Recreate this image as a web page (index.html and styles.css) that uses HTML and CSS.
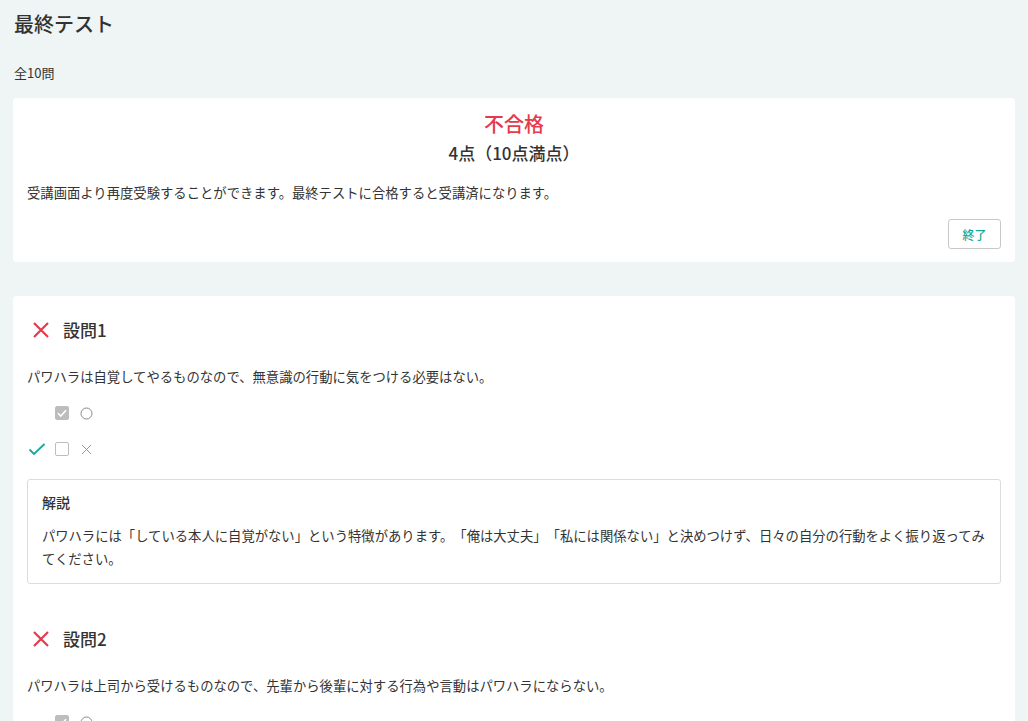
FILE: index.html
```html
<!DOCTYPE html>
<html lang="ja">
<head>
<meta charset="utf-8">
<title>最終テスト</title>
<link rel="stylesheet" href="styles.css">
</head>
<body>
<h1 class="page-title">最終テスト</h1>
<div class="count">全10問</div>

<section class="card result">
  <div class="result-status">不合格</div>
  <div class="result-score">4点（10点満点）</div>
  <p class="result-note">受講画面より再度受験することができます。最終テストに合格すると受講済になります。</p>
  <div class="result-actions"><button class="btn-end">終了</button></div>
</section>

<section class="card questions">
  <div class="question">
    <div class="q-head">
      <svg class="q-mark" width="24" height="24" viewBox="0 0 24 24"><path d="M5 5L19 19M19 5L5 19" stroke="#e63a4c" stroke-width="2.2" fill="none"/></svg>
      <span class="q-title">設問1</span>
    </div>
    <p class="q-text">パワハラは自覚してやるものなので、無意識の行動に気をつける必要はない。</p>
    <div class="options">
      <div class="opt">
        <span class="opt-slot"></span>
        <span class="box checked"><svg width="14" height="14" viewBox="0 0 14 14"><path d="M3 7.2L5.8 10L11 4.2" stroke="#fff" stroke-width="1.6" fill="none"/></svg></span>
        <span class="opt-label"><svg width="13" height="13" viewBox="0 0 13 13"><circle cx="6.5" cy="6.5" r="5.5" stroke="#888" stroke-width="1" fill="none"/></svg></span>
      </div>
      <div class="opt">
        <span class="opt-slot"><svg width="20" height="20" viewBox="0 0 20 20"><path d="M2.5 10.5L7 15L17.5 5" stroke="#17a89b" stroke-width="1.8" fill="none"/></svg></span>
        <span class="box"></span>
        <span class="opt-label"><svg width="13" height="13" viewBox="0 0 13 13"><path d="M2 2L11 11M11 2L2 11" stroke="#999" stroke-width="1" fill="none"/></svg></span>
      </div>
    </div>
    <div class="explain">
      <div class="explain-title">解説</div>
      <p class="explain-text">パワハラには「している本人に自覚がない」という特徴があります。「俺は大丈夫」「私には関係ない」と決めつけず、日々の自分の行動をよく振り返ってみてください。</p>
    </div>
  </div>

  <div class="question">
    <div class="q-head">
      <svg class="q-mark" width="24" height="24" viewBox="0 0 24 24"><path d="M5 5L19 19M19 5L5 19" stroke="#e63a4c" stroke-width="2.2" fill="none"/></svg>
      <span class="q-title">設問2</span>
    </div>
    <p class="q-text">パワハラは上司から受けるものなので、先輩から後輩に対する行為や言動はパワハラにならない。</p>
    <div class="options">
      <div class="opt">
        <span class="opt-slot"></span>
        <span class="box checked"><svg width="14" height="14" viewBox="0 0 14 14"><path d="M3 7.2L5.8 10L11 4.2" stroke="#fff" stroke-width="1.6" fill="none"/></svg></span>
        <span class="opt-label"><svg width="13" height="13" viewBox="0 0 13 13"><circle cx="6.5" cy="6.5" r="5.5" stroke="#888" stroke-width="1" fill="none"/></svg></span>
      </div>
      <div class="opt">
        <span class="opt-slot"><svg width="20" height="20" viewBox="0 0 20 20"><path d="M2.5 10.5L7 15L17.5 5" stroke="#17a89b" stroke-width="1.8" fill="none"/></svg></span>
        <span class="box"></span>
        <span class="opt-label"><svg width="13" height="13" viewBox="0 0 13 13"><path d="M2 2L11 11M11 2L2 11" stroke="#999" stroke-width="1" fill="none"/></svg></span>
      </div>
    </div>
  </div>
</section>
</body>
</html>
```
FILE: styles.css
```css
html, body {
  margin: 0;
  padding: 0;
}
body {
  background: #eff4f4;
  color: #333;
  font-family: "Noto Sans CJK JP", "Noto Sans", sans-serif;
  font-size: 13px;
  padding: 0 13px 40px;
  text-spacing-trim: space-all;
}
.page-title {
  margin: 10px 0 0 1px;
  font-size: 20px;
  line-height: 28px;
  font-weight: 500;
  color: #333;
}
.count {
  margin-top: 25px;
  line-height: 20px;
  font-size: 13px;
  padding-left: 1px;
}
.card {
  background: #fff;
  border-radius: 4px;
}
.result {
  margin-top: 15px;
  padding: 12px 14px 13px;
  display: flex;
  flex-direction: column;
}
.result-status {
  text-align: center;
  color: #e63a4c;
  font-size: 20px;
  line-height: 28px;
  font-weight: 500;
}
.result-score {
  text-align: center;
  font-size: 17px;
  line-height: 24px;
  font-weight: 500;
  margin-top: 3px;
}
.result-note {
  margin: 18px 0 0;
  line-height: 20px;
  font-size: 13.33px;
}
.result-actions {
  display: flex;
  justify-content: flex-end;
  margin-top: 16px;
}
.btn-end {
  width: 53px;
  height: 30px;
  border: 1px solid #c8c8c8;
  border-radius: 3px;
  background: #fff;
  color: #17a89b;
  font-family: inherit;
  font-size: 12px;
  font-weight: 500;
  padding: 0;
}
.questions {
  margin-top: 34px;
  padding: 22px 14px 20px;
}
.question + .question {
  margin-top: 43px;
}
.q-head {
  display: flex;
  align-items: center;
  gap: 10px;
  height: 24px;
  padding-left: 2px;
}
.q-mark {
  flex: none;
}
.q-title {
  font-size: 17px;
  line-height: 24px;
  font-weight: 500;
}
.q-text {
  margin: 25px 0 0;
  line-height: 20px;
  font-size: 13.33px;
}
.options {
  margin-top: 14px;
  display: flex;
  flex-direction: column;
  gap: 12px;
}
.opt {
  display: flex;
  align-items: center;
  height: 24px;
}
.opt-slot {
  width: 28px;
  display: flex;
  align-items: center;
}
.box {
  width: 14px;
  height: 14px;
  box-sizing: border-box;
  border: 1px solid #bdbdbd;
  border-radius: 2px;
  background: #fff;
  display: flex;
}
.box.checked {
  background: #bdbdbd;
  border-color: #bdbdbd;
}
.box svg {
  margin: -1px;
}
.opt-label {
  margin-left: 11px;
  display: flex;
}
.explain {
  margin-top: 18px;
  border: 1px solid #dcdcdc;
  border-radius: 3px;
  padding: 12px 10px 13px 14px;
}
.explain-title {
  font-size: 14px;
  line-height: 20px;
  font-weight: 500;
}
.explain-text {
  margin: 12px 0 0;
  line-height: 23px;
  font-size: 13.33px;
}
```
